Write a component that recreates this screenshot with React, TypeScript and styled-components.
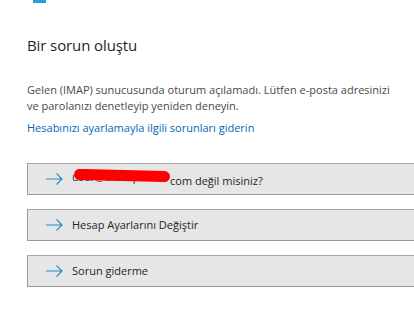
import styled, { createGlobalStyle } from 'styled-components';

const GlobalStyle = createGlobalStyle`
    body {
        margin: 0;
        background: #FFFFFF;
        font-family: "Open Sans", "Noto Sans", sans-serif;
    }
`;

const actions = [
    { id: 'account', label: 'com değil misiniz?', redacted: true },
    { id: 'settings', label: 'Hesap Ayarlarını Değiştir', redacted: false },
    { id: 'troubleshoot', label: 'Sorun giderme', redacted: false },
];

const ArrowIcon = () => (
    <svg width="17" height="12" viewBox="0 0 17 12" fill="none">
        <path d="M0 6 H16 M10.5 0.5 L16 6 L10.5 11.5" stroke="#1C8AD6" strokeWidth="1.1" />
    </svg>
);

const App = () => {
    return (
        <>
            <GlobalStyle />
            <Page>
                <AccentBar />
                <Title>Bir sorun oluştu</Title>
                <Message>
                    Gelen (IMAP) sunucusunda oturum açılamadı. Lütfen e-posta adresinizi ve parolanızı denetleyip yeniden deneyin.
                </Message>
                <HelpLink href="#">Hesabınızı ayarlamayla ilgili sorunları giderin</HelpLink>
                <ActionList>
                    {actions.map((action) => (
                        <ActionButton key={action.id}>
                            <ArrowIcon />
                            <ActionLabel>
                                {action.redacted && (
                                    <Redacted>
                                        user@example.
                                        <Scribble />
                                    </Redacted>
                                )}
                                {action.label}
                            </ActionLabel>
                        </ActionButton>
                    ))}
                </ActionList>
            </Page>
        </>
    );
};

export default App;

const Page = styled.div`
    width: 414px;
    height: 322px;
    overflow: hidden;
    padding-left: 27px;
    box-sizing: border-box;
`;

const AccentBar = styled.div`
    width: 13px;
    height: 3px;
    margin-left: 6px;
    background: #2B9BE0;
`;

const Title = styled.h1`
    margin: 32px 0 0 0;
    font-size: 15px;
    line-height: 20px;
    font-weight: 400;
    color: #1F1F1F;
    letter-spacing: -0.1px;
`;

const Message = styled.p`
    margin: 27px 0 0 0;
    width: 370px;
    font-size: 11px;
    line-height: 16px;
    color: #4A4A4A;
`;

const HelpLink = styled.a`
    display: block;
    margin-top: 6px;
    font-size: 11px;
    line-height: 16px;
    color: #0067B8;
    text-decoration: none;
`;

const ActionList = styled.div`
    display: flex;
    flex-direction: column;
    gap: 14px;
    margin-top: 27px;
`;

const ActionButton = styled.div`
    width: 420px;
    height: 32px;
    box-sizing: border-box;
    display: flex;
    align-items: center;
    gap: 9px;
    padding-left: 18px;
    background: #E6E6E6;
    border: 1px solid #9A9A9A;
    border-top-color: #A8A8A8;
`;

const ActionLabel = styled.span`
    font-size: 11px;
    line-height: 16px;
    color: #1F1F1F;
`;

const Redacted = styled.span`
    position: relative;
    display: inline-block;
    width: 98px;
    overflow: hidden;
    white-space: nowrap;
    color: #333333;
`;

const Scribble = styled.span`
    position: absolute;
    left: 2px;
    top: 1px;
    width: 96px;
    height: 11px;
    background: #FF0000;
    border-radius: 6px;
    transform: rotate(1.5deg);
`;
